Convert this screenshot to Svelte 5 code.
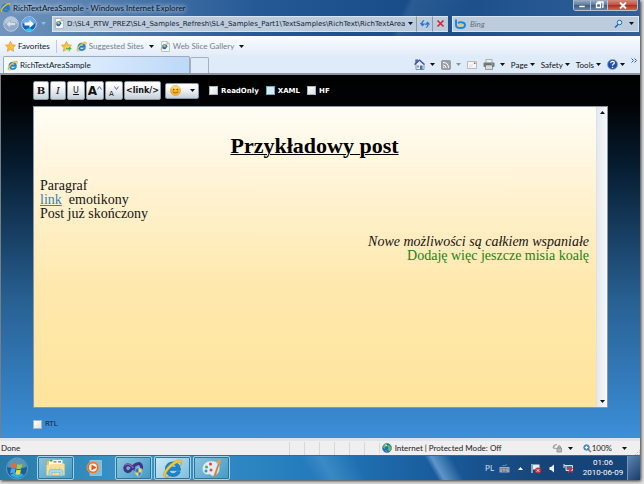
<script>
  let readOnly = $state(false);
  let xaml = $state(false);
  let hf = $state(false);
  let rtl = $state(false);
  let address = $state('D:\\SL4_RTW_PREZ\\SL4_Samples_Refresh\\SL4_Samples_Part1\\TextSamples\\RichText\\RichTextArea');
  let query = $state('');
  const panes = [1, 2, 3, 4, 5, 6];
</script>

{#snippet ie(size)}
  <svg width={size} height={size} viewBox="0 0 24 24" aria-hidden="true">
    <path d="M21 14H8.500c.2 5 6.800 5.200 8 1.700h4.200C18.500 23.500 4 23 4 12.500 4 2 21 1.500 21 14zM8.700 10.500h7.800c-.5-4.200-7.300-4.200-7.800 0z" fill="#168ad8" stroke="#075b9d" stroke-width=".8" />
    <path d="M3 22C-2 18 10 3 20 2c5 0 2 6 1 7 1-3 1-5-2-4C12 7 3 17 4 21c1 2 5 0 6-1-2 2-5 3-7 2z" fill="#f8c938" stroke="#b88a16" stroke-width=".5" />
  </svg>
{/snippet}

{#snippet page(size)}
  <svg width={size} height={size} viewBox="0 0 20 20" aria-hidden="true">
    <path d="M3 1h10l4 4v14H3z" fill="#fff" stroke="#83909c" />
    <path d="M13 1v4h4" fill="#dce4eb" stroke="#83909c" />
    <path d="M12.500 11H5c0 3.500 4.500 3.500 5.500 1.500M5 10c0-4 7-5 7.500 1" fill="none" stroke="#1670bd" stroke-width="2.400" />
    <path d="M2 16C1 12 8 5 14 5" fill="none" stroke="#f0b521" stroke-width="1.500" />
  </svg>
{/snippet}

{#snippet arrow()}
  <svg class="arrow" width="5" height="3" viewBox="0 0 5 3" aria-hidden="true"><path d="M0 0h5L2.500 3z" fill="currentColor" /></svg>
{/snippet}

{#snippet star(add)}
  <svg width="11" height="11" viewBox="0 0 24 24" aria-hidden="true">
    <path d="M12 1l3.400 7.200 7.600 1-5.600 5.500 1.500 7.800L12 18.700l-6.900 3.800 1.500-7.800L1 9.200l7.600-1z" fill="#ffc13b" stroke="#e38713" stroke-width="1.300" />
    {#if add}<path d="M10 14h7v-4l7 6.500-7 6.500v-4h-7z" fill="#51b93b" stroke="#fff" />{/if}
  </svg>
{/snippet}

<div class="screen">
  <div class="desktop">
    <header class="glass">
      <div class="titlebar">
        {@render ie(11)}
        <h1>RichTextAreaSample - Windows Internet Explorer</h1>
        <div class="caption">
          <button aria-label="Minimize"><svg width="8" height="8" viewBox="0 0 8 8"><path d="M1 4.500h6v2H1z" fill="#fff" stroke="#4a5667" stroke-width=".5" /></svg></button>
          <button aria-label="Restore"><svg width="9" height="8" viewBox="0 0 9 8"><path d="M3 2V1h5v5H7M1.500 2.500h4v4h-4z" fill="none" stroke="#fff" stroke-width="1.300" /></svg></button>
          <button class="close" aria-label="Close"><svg width="8" height="7" viewBox="0 0 8 7"><path d="M1 .5l6 6M7 .5l-6 6" stroke="#fff" stroke-width="1.900" /></svg></button>
        </div>
      </div>
      <nav class="navrow" aria-label="Navigation">
        <button class="round" aria-label="Back"><svg width="16" height="16" viewBox="0 0 32 32"><circle cx="16" cy="16" r="14.500" fill="#8fabc9" stroke="#b9cbdd" stroke-width="2" /><path d="M3 15a13 13 0 0 1 26 0z" fill="#c6d4e2" opacity=".7" /><path d="M6 16l9-8v5h10v6H15v5z" fill="#d6e0eb" stroke="#8199b6" /></svg></button>
        <button class="round" aria-label="Forward"><svg width="16" height="16" viewBox="0 0 32 32"><circle cx="16" cy="16" r="14.500" fill="#1262bd" stroke="#b9d6ef" stroke-width="2" /><path d="M3 15a13 13 0 0 1 26 0z" fill="#6aabe8" /><path d="M8 28q8-7 16 0-8 5-16 0z" fill="#24cbf4" /><path d="M26 16l-9-8v5H7v6h10v5z" fill="#fff" /></svg></button>
        <button class="recent" aria-label="Recent pages">{@render arrow()}</button>
        <div class="field address">
          {@render page(11)}
          <input aria-label="Address" bind:value={address} />
          <button aria-label="Show addresses">{@render arrow()}</button>
        </div>
        <button class="square" aria-label="Refresh"><svg width="10" height="10" viewBox="0 0 20 20"><path d="M8 3C3 5 4 9 5 11M1 8l4 5 4-4M12 17c5-2 4-6 3-8m-4 3l4-5 4 4" fill="none" stroke="#2675d7" stroke-width="2.500" /></svg></button>
        <button class="square" aria-label="Stop"><svg width="9" height="9" viewBox="0 0 9 9"><path d="M1.500 1.500l6 6M7.500 1.500l-6 6" stroke="#cb2836" stroke-width="1.600" /></svg></button>
        <div class="field search">
          <svg width="12" height="10" viewBox="0 0 24 20" aria-hidden="true"><path d="M2 1v11c0 8 18 8 18 0 0-5-8-7-14-4" fill="none" stroke="#1888de" stroke-width="4" /><circle cx="11" cy="12" r="3.500" fill="#ffc12b" /></svg>
          <input aria-label="Search" placeholder="Bing" bind:value={query} />
          <button aria-label="Search now"><svg width="9" height="9" viewBox="0 0 18 18"><circle cx="11" cy="7" r="4.500" fill="#d6edfc" stroke="#1c68b5" stroke-width="2" /><path d="M8 11l-6 6" stroke="#1c68b5" stroke-width="3" /></svg></button>
          <button aria-label="Search options">{@render arrow()}</button>
        </div>
      </nav>
    </header>

    <nav class="favorites" aria-label="Favorites">
      <button>{@render star(false)}<span>Favorites</span></button>
      <i class="rule"></i>
      <button aria-label="Add to favorites">{@render star(true)}</button>
      <button class="dim">{@render ie(11)}<span>Suggested Sites</span>{@render arrow()}</button>
      <button class="dim">{@render page(11)}<span>Web Slice Gallery</span>{@render arrow()}</button>
    </nav>

    <div class="tabs">
      <button class="tab">{@render ie(11)}<span>RichTextAreaSample</span></button>
      <button class="newtab" aria-label="New tab"></button>
      <div class="commands">
        <button class="wide" aria-label="Home"><svg width="11" height="11" viewBox="0 0 22 22"><path d="M2 11L11 3l9 8v10H4V10" fill="#e6edf6" stroke="#68788c" stroke-width="1.500" /><path d="M1 11l10-9 10 9M4 8V2h4" fill="none" stroke="#3550ae" stroke-width="2.500" /><path d="M12 13h5v8h-5z" fill="#3f71b2" /><path d="M6 13h4v4H6z" fill="#8097b4" /></svg>{@render arrow()}</button>
        <button aria-label="Feeds" class="dim wide"><svg width="10" height="10" viewBox="0 0 20 20"><rect x="1" y="1" width="18" height="18" rx="2" fill="#9a9fa5" stroke="#777" /><path d="M4 5q11 0 11 11M4 10q6 0 6 6" fill="none" stroke="#fff" stroke-width="2" /><circle cx="5.500" cy="14.500" r="1.500" fill="#fff" /></svg>{@render arrow()}</button>
        <button aria-label="Read mail"><svg width="10" height="8" viewBox="0 0 20 16"><path d="M1 1h18v14H1z" fill="#f5f5f4" stroke="#aaa" stroke-width="1.500" /><path d="M14 3h3v3h-3z" fill="#d9483b" /><path d="M4 8h8M4 11h6" stroke="#d4d4d8" /></svg></button>
        <button class="wide" aria-label="Print"><svg width="12" height="11" viewBox="0 0 24 22"><path d="M6 1h12v8H6z" fill="#eee" stroke="#777" /><rect x="1" y="7" width="22" height="9" rx="2" fill="#74797c" /><path d="M5 12h14v9H5z" fill="#d8dddb" stroke="#555" /><path d="M17 9h3v2h-3z" fill="#58e564" /></svg>{@render arrow()}</button>
        <button><span>Page</span>{@render arrow()}</button>
        <button><span>Safety</span>{@render arrow()}</button>
        <button><span>Tools</span>{@render arrow()}</button>
        <button aria-label="Help"><svg width="11" height="11" viewBox="0 0 22 22"><circle cx="11" cy="11" r="10" fill="#2352ad" stroke="#8aa1c8" stroke-width="1.500" /><path d="M7.500 8c0-5 8-4 7 0-.5 2-3.500 2-3.500 5" fill="none" stroke="#fff" stroke-width="2.400" /><circle cx="11" cy="17" r="1.500" fill="#fff" /></svg>{@render arrow()}</button>
        <button class="more" aria-label="More commands"><svg width="6" height="5" viewBox="0 0 6 5"><path d="M.5.500l2 2-2 2M3.500.500l2 2-2 2" fill="none" stroke="#4054a4" /></svg></button>
      </div>
    </div>

    <main>
      <div class="toolbar">
        <div class="group">
          <button class="serif" aria-label="Bold"><b>B</b></button>
          <button class="serif" aria-label="Italic"><i>I</i></button>
          <button class="under" aria-label="Underline"><u>U</u></button>
          <button class="grow" aria-label="Larger text"><b>A</b><svg width="5" height="4" viewBox="0 0 5 4"><path d="M.5 3.500l2-3 2 3" fill="none" stroke="#5560ee" /></svg></button>
          <button class="shrink" aria-label="Smaller text"><span>A</span><svg width="5" height="4" viewBox="0 0 5 4"><path d="M.5.500l2 3 2-3" fill="none" stroke="#5560ee" /></svg></button>
          <button class="link"><b>&lt;link/&gt;</b></button>
        </div>
        <button class="emoticon" aria-label="Insert emoticon" aria-haspopup="listbox"><svg width="11" height="11" viewBox="0 0 22 22"><circle cx="11" cy="11" r="10" fill="#f9b52c" stroke="#d98b19" /><path d="M3 8a8 7 0 0 1 16 0z" fill="#ffdc70" /><ellipse cx="7.500" cy="9" rx="1.300" ry="2.200" fill="#81510b" /><ellipse cx="14.500" cy="9" rx="1.300" ry="2.200" fill="#81510b" /><path d="M5.500 14q5.500 4 11 0" fill="none" stroke="#8d5309" stroke-width="1.600" /></svg>{@render arrow()}</button>
        <label><input type="checkbox" bind:checked={readOnly} />ReadOnly</label>
        <label><input class="hot" type="checkbox" bind:checked={xaml} />XAML</label>
        <label><input type="checkbox" bind:checked={hf} />HF</label>
      </div>

      <div class="editor" dir={rtl ? 'rtl' : 'ltr'}>
        <article>
          <h2>Przykładowy post</h2>
          <p>Paragraf</p>
          <p><a href="#link">link</a>&nbsp; emotikony</p>
          <p>Post już skończony</p>
          <p class="end first"><em>Nowe możliwości są całkiem wspaniałe</em></p>
          <p class="end green">Dodaję więc jeszcze misia koalę</p>
        </article>
        <div class="scroll">
          <button class="up" aria-label="Scroll up">{@render arrow()}</button>
          <button aria-label="Scroll down">{@render arrow()}</button>
        </div>
      </div>
      <label class="rtl"><input type="checkbox" bind:checked={rtl} />RTL</label>
    </main>

    <footer class="status">
      <span class="done">Done</span>
      {#each panes as pane (pane)}<i class="pane"></i>{/each}
      <div class="zone"><svg width="10" height="10" viewBox="0 0 20 20" aria-hidden="true"><circle cx="10" cy="10" r="9" fill="#246cc5" stroke="#3f608c" /><path d="M3 5q4-5 7-3l-1 4-3 2v4L2 9zM12 3l6 5v4l-3 5-4-4 2-3-2-3zM5 14l5 1-1 3z" fill="#5fc54a" /><path d="M6 3l5 2-3 2z" fill="#dff6ff" /></svg>Internet | Protected Mode: Off</div>
      <button class="protect" aria-label="Privacy"><svg width="11" height="10" viewBox="0 0 22 20"><path d="M2 9q0-6 8-6M6 5l-4 5 7 1" fill="none" stroke="#9b9b9b" stroke-width="2" /><path d="M10 10h9v8h-9zM12 10V7q3-4 5 0v3" fill="#bbb" stroke="#858585" stroke-width="1.500" /></svg>{@render arrow()}</button>
      <button class="zoom"><svg width="9" height="9" viewBox="0 0 18 18" aria-hidden="true"><path d="M10 10l6 6" stroke="#977456" stroke-width="3" /><circle cx="7" cy="7" r="5.500" fill="#4c9ce4" stroke="#2d69b3" stroke-width="1.500" /><path d="M4 7h6M7 4v6" stroke="#fff" stroke-width="2" /></svg><span>100%</span>{@render arrow()}</button>
      <svg class="grip" width="5" height="5" viewBox="0 0 5 5" aria-hidden="true"><path d="M4 0h1v1H4zM2 2h1v1H2zM4 2h1v1H4zM0 4h1v1H0zM2 4h1v1H2zM4 4h1v1H4z" fill="#bbb" /></svg>
    </footer>

    <nav class="taskbar" aria-label="Taskbar">
      <button class="start" aria-label="Start"><svg width="24" height="23" viewBox="0 0 48 46"><circle cx="24" cy="23" r="21" fill="#1c5f95" stroke="#5fa2c9" stroke-width="2" /><path d="M5 20a19 17 0 0 1 38 0q-19 7-38 0z" fill="#76a9c9" opacity=".7" /><path d="M10 36q14-11 28 0-14 13-28 0z" fill="#2dbff0" opacity=".8" /><path d="M14 13q5-3 9 0l-2 9q-4-3-9 0z" fill="#ee6735" /><path d="M25 14q4 3 10 0l-3 9q-5 3-9 0z" fill="#9fce45" /><path d="M12 24q4-3 9 0l-2 9q-4-3-9 0z" fill="#4aa7ec" /><path d="M23 25q4 3 9 0l-2 9q-5 3-9 0z" fill="#ffd343" /></svg></button>
      <button class="app" aria-label="Windows Explorer"><svg width="22" height="20" viewBox="0 0 44 40"><path d="M3 5h15l3 5h18v24H3z" fill="#e5c46c" stroke="#bd9540" /><path d="M8 4h27v12H8z" fill="#fff" /><path d="M9 4h6v3H9z" fill="#31ae4b" /><path d="M17 6h6v3h-6z" fill="#df7043" /><path d="M26 6h6v3h-6z" fill="#4b93db" /><path d="M3 14q19-4 36-2v23H3z" fill="#f5df99" /><path d="M12 18v18M20 18v18M29 18v18" stroke="#ddbc6b" /><path d="M8 36v-8q0-5 5-5h18q5 0 5 5v8h-6v-7H14v7z" fill="#a9dbeb" stroke="#6cabc6" /></svg></button>
      <button class="app flat" aria-label="Media Player"><svg width="18" height="18" viewBox="0 0 36 36"><path d="M8 3h23v30H8z" fill="#79bfdf" stroke="#b2e0ef" /><circle cx="14" cy="17" r="12" fill="#ef6e1d" stroke="#ffb073" /><circle cx="14" cy="17" r="8" fill="#f4f7f9" /><path d="M11 11l10 6-10 6z" fill="#e55716" /></svg></button>
      <button class="app" aria-label="Visual Studio"><svg width="21" height="19" viewBox="0 0 42 38"><path d="M4 16C8 7 17 13 24 21s14 1 13-6C35 4 23 10 17 20S2 24 4 16z" fill="none" stroke="#453083" stroke-width="6" /><path d="M4 13c5-7 12-1 17 5" fill="none" stroke="#7d67b5" stroke-width="3" /><path d="M24 20l7-3 7 3c0 9-2 12-7 16-5-4-7-7-7-16z" fill="#2a78ce" stroke="#e9f1fa" /><path d="M31 18l6 2v7h-6zM25 27h6v8c-4-3-5-4-6-8z" fill="#ffda3d" /></svg></button>
      <button class="app active" aria-label="Internet Explorer">{@render ie(21)}</button>
      <button class="app" aria-label="Paint"><svg width="22" height="21" viewBox="0 0 44 42"><path d="M21 6C8 5 0 17 4 27s13 3 16 7 15 2 17-12S30 7 21 6z" fill="#e0edf5" stroke="#8db7d1" /><circle cx="11" cy="18" r="3" fill="#4fae45" /><circle cx="19" cy="12" r="3" fill="#d9463d" /><circle cx="10" cy="26" r="3" fill="#358bd1" /><circle cx="20" cy="24" r="3" fill="#d54d50" /><path d="M25 36L35 8l3 1-9 29z" fill="#d58337" /><path d="M31 11q1-9 9-9l-2 10z" fill="#e59d54" /></svg></button>
      <div class="tray">
        <span class="lang">PL</span>
        <svg width="11" height="9" viewBox="0 0 22 18" aria-hidden="true"><path d="M7 5q0-3 4-2t4-3" fill="none" stroke="#bbb" /><path d="M1 6h20v11H1z" fill="#a7adaf" /><path d="M3 9h16M3 12h16M6 15h10" stroke="#56646c" stroke-width="1.500" stroke-dasharray="2 1" /></svg>
        <svg width="5" height="3" viewBox="0 0 5 3" aria-hidden="true"><path d="M2.500 0L5 3H0z" fill="#fff" /></svg>
        <svg width="10" height="11" viewBox="0 0 20 22" aria-hidden="true"><path d="M2 2v18" stroke="#fff" stroke-width="2" /><path d="M4 3h13v10H4z" fill="#e5ecf4" /><circle cx="14" cy="15" r="6" fill="#d52b35" /><path d="M11.500 12.500l5 5m0-5l-5 5" stroke="#fff" stroke-width="1.700" /></svg>
        <svg width="6" height="9" viewBox="0 0 12 18" aria-hidden="true"><path d="M1 6h3l6-5v16l-6-5H1z" fill="#eef5fb" /></svg>
        <svg width="11" height="11" viewBox="0 0 22 22" aria-hidden="true"><path d="M6 5h13v10H6zM2 2v8M2 5h4" fill="#536c89" stroke="#d9e3ed" stroke-width="2" /><path d="M10 10l9 9m0-9l-9 9" stroke="#e42933" stroke-width="3" /></svg>
        <time datetime="2010-06-09T01:06"><span>01:06</span><span>2010-06-09</span></time>
      </div>
      <button class="peek" aria-label="Show desktop"></button>
    </nav>
  </div>
</div>

<style>
  :global(body) { margin: 0; }
  .screen {
    box-sizing: border-box;
    min-height: 100vh;
    padding: 0 4px 4px 0;
    display: flex;
    background: #dedede;
    font: 8px/10px Lato, "Noto Sans", sans-serif;
    color: #101a28;
  }
  .desktop { flex: 1; min-width: 0; display: flex; flex-direction: column; box-shadow: 1px 1px 3px #333; }
  svg { display: block; flex: none; }
  button { display: flex; align-items: center; justify-content: center; padding: 0; border: 0; background: none; color: inherit; font: inherit; }
  .arrow { color: #111; }
  .glass { background: linear-gradient(115deg, transparent 62%, #ffffff16 63%, transparent 72%), linear-gradient(90deg, #7295bd, #255996 40%, #174c88 65%, #315f98); }
  .titlebar { height: 15px; display: flex; align-items: center; gap: 2px; }
  .titlebar h1 { flex: 1; margin: 0; font: inherit; color: #061326; text-shadow: 0 0 5px #cfdeee, 0 0 5px #cfdeee; }
  .caption { display: flex; align-self: flex-start; margin-right: 2px; border: 1px solid #b5c1d1; border-top: 0; border-radius: 0 0 3px 3px; overflow: hidden; }
  .caption button { width: 17px; height: 10px; background: linear-gradient(#9dafc4, #627e9f 45%, #3a5c86 50%, #6583a6); border-right: 1px solid #b5c1d1; }
  .caption .close { width: 29px; border: 0; background: linear-gradient(#d58b7b, #c35545 45%, #a82b1c 50%, #d06b4b); }
  .navrow { height: 17px; display: flex; align-items: center; padding: 0 1px 4px; }
  .round { margin-left: 1px; width: 17px; }
  .recent { width: 13px; }
  .recent .arrow { color: #84c0ee; }
  .field, .square { box-sizing: border-box; height: 16px; background: #bdccdd; border: 1px solid #dbe5ef; }
  .field { display: flex; align-items: center; }
  .field input { flex: 1; min-width: 0; width: 0; box-sizing: border-box; height: 14px; padding: 0; border: 0; background: none; outline: 0; color: #17212e; font: inherit; }
  .address { flex: 1; margin-left: 2px; padding: 0 2px 0 1px; gap: 2px; border-right: 0; font: 7px/10px "DejaVu Sans", sans-serif; }
  .address button { width: 7px; height: 14px; }
  .square { width: 16px; border-left-color: #8799ad; border-right-width: 0; }
  .search { width: 187px; margin-left: 4px; padding: 0 2px; gap: 3px; }
  .search input::placeholder { color: #66717e; font-style: italic; opacity: 1; }
  .search button { width: 10px; height: 14px; }
  .favorites { height: 18px; display: flex; align-items: center; gap: 4px; padding: 0 5px; border-top: 1px solid #f7fbff; background: linear-gradient(#f9fcff, #e3edf9); }
  .favorites button { gap: 2px; color: #101820; }
  .favorites .dim { color: #75808c; }
  .favorites .dim .arrow { margin-left: 3px; }
  .favorites .dim + .dim { margin-left: 2px; }
  .rule { width: 1px; height: 13px; margin-left: 2px; background: #c1cbd6; }
  .tabs { height: 18px; display: flex; align-items: flex-end; padding-left: 3px; background: #dfebf8; border-bottom: 2px solid #8a959f; }
  .tab { box-sizing: border-box; width: 187px; height: 17px; justify-content: flex-start; gap: 2px; padding-left: 3px; border: 1px solid #9eacba; border-bottom: 0; border-radius: 2px 2px 0 0; background: linear-gradient(90deg, #f5faff, #bcd9f8); }
  .newtab { box-sizing: border-box; width: 19px; height: 16px; border: 1px solid #a6b1bd; border-bottom: 0; border-radius: 2px 2px 0 0; }
  .commands { flex: 1; height: 17px; display: flex; align-items: center; justify-content: flex-end; gap: 6px; }
  .commands button { gap: 2px; color: #111; }
  .commands .wide { gap: 5px; }
  .commands .dim .arrow { color: #8a929b; }
  .commands .more { align-self: flex-start; padding: 2px 3px 0 0; }
  main { flex: 1; min-height: 0; display: flex; flex-direction: column; padding: 6px 32px 9px 32px; border-left: 1px solid #777e85; background: linear-gradient(#000 0, #010305 8%, #061c30 25%, #286092 62%, #3b8fd9 100%); }
  .toolbar { display: flex; align-items: center; height: 19px; color: #fff; font: bold 7px/10px "DejaVu Sans", sans-serif; }
  .group { display: flex; gap: 1px; margin-right: 4px; }
  .toolbar button { box-sizing: border-box; width: 18px; height: 19px; border: 1px solid #8696a5; border-radius: 2px; background: linear-gradient(#fff 15%, #e3e8ed 60%, #c4cfd9); color: #111; }
  .toolbar .serif { width: 16px; font: 10px/12px "DejaVu Serif", serif; }
  .toolbar .under { font-size: 8px; font-weight: normal; }
  .toolbar .grow { font: 12px/14px "DejaVu Sans", sans-serif; }
  .grow svg { align-self: flex-start; margin-top: 4px; }
  .shrink span { align-self: flex-end; font-weight: normal; }
  .shrink svg { align-self: flex-start; margin-top: 4px; }
  .toolbar .link { width: 37px; font: 8px/12px "DejaVu Sans", sans-serif; }
  .toolbar .emoticon { width: 34px; height: 16px; gap: 9px; }
  label { display: flex; align-items: center; gap: 3px; }
  .toolbar label { margin-left: 7px; }
  .toolbar .emoticon + label { margin-left: 10px; }
  input[type="checkbox"] { appearance: none; box-sizing: border-box; width: 9px; height: 9px; margin: 0; border: 1px solid #a9b4bf; background: linear-gradient(135deg, #fff, #dbe2e8); }
  input[type="checkbox"]:checked { background: #42637f; }
  input[type="checkbox"].hot { border-color: #69adca; background: #dceaf2; }
  .editor { flex: 1; min-height: 0; display: flex; margin-top: 6px; border: 1px solid #8b98a3; background: linear-gradient(#fffdf6, #fff2d0 30%, #ffe8ad 60%, #fee49c); }
  article { flex: 1; padding: 26px 7px 0 6px; color: #141414; font: 14px/14px "Liberation Serif", serif; }
  h2 { margin: 0 0 20px; text-align: center; font-size: 22px; line-height: 26px; text-decoration-thickness: 1px; text-decoration-line: underline; color: #000; }
  p { margin: 0; }
  article a { color: #377fc0; }
  .first { margin-top: 14px; }
  .end { text-align: right; }
  .green { color: #168516; }
  .scroll { width: 10px; display: flex; flex-direction: column; justify-content: space-between; border-left: 1px solid #dce1e6; background: linear-gradient(90deg, #e4e9ee, #f6f8fa); }
  .scroll button { height: 11px; }
  .up .arrow { transform: rotate(180deg); }
  .rtl { margin-top: 12px; color: #10253a; font: 7px/9px "DejaVu Sans", sans-serif; }
  .status { height: 14px; display: flex; align-items: center; border-top: 3px solid #dce5ed; background: #f0eeee; color: #222; }
  .done { flex: 1; padding-left: 1px; }
  .pane { width: 14px; height: 13px; border-left: 1px solid #d8d8d8; }
  .zone { display: flex; align-items: center; gap: 3px; width: 170px; padding-left: 2px; border-left: 1px solid #d8d8d8; }
  .protect, .zoom { gap: 5px; }
  .zoom { margin-left: 10px; gap: 0; }
  .zoom .arrow { margin-left: 10px; }
  .grip { align-self: flex-end; margin-left: 8px; }
  .taskbar { height: 24px; display: flex; align-items: stretch; border-top: 1px solid #48677d; background: linear-gradient(60deg, transparent 48%, #68aee055 51%, transparent 56%, transparent 67%, #8fbce699 68%, transparent 71%), linear-gradient(90deg, #287aa7, #3a96cb 22%, #2379ba 50%, #195c9d 68%, #174478 85%); }
  .start { width: 33px; margin-right: 4px; }
  .app { box-sizing: border-box; width: 37px; margin-right: 2px; border: 1px solid #9fd2ea; border-radius: 2px; outline: 1px solid #34718e; outline-offset: -2px; background: linear-gradient(135deg, #8ac5df, #419ac6); }
  .flat { border-color: transparent; outline: 0; background: none; }
  .active { background: linear-gradient(135deg, #d0eaf5, #7dbddd); }
  .tray { flex: 1; display: flex; align-items: center; justify-content: flex-end; gap: 8px; color: #fff; }
  .lang { color: #c7e2f6; }
  .tray .lang { margin-right: -3px; }
  time { display: flex; flex-direction: column; align-items: center; width: 42px; white-space: nowrap; font-family: Roboto, sans-serif; }
  .peek { width: 13px; margin-left: 3px; border-left: 1px solid #7694b7; background: linear-gradient(135deg, #5d83ae, #183e70); }
</style>
